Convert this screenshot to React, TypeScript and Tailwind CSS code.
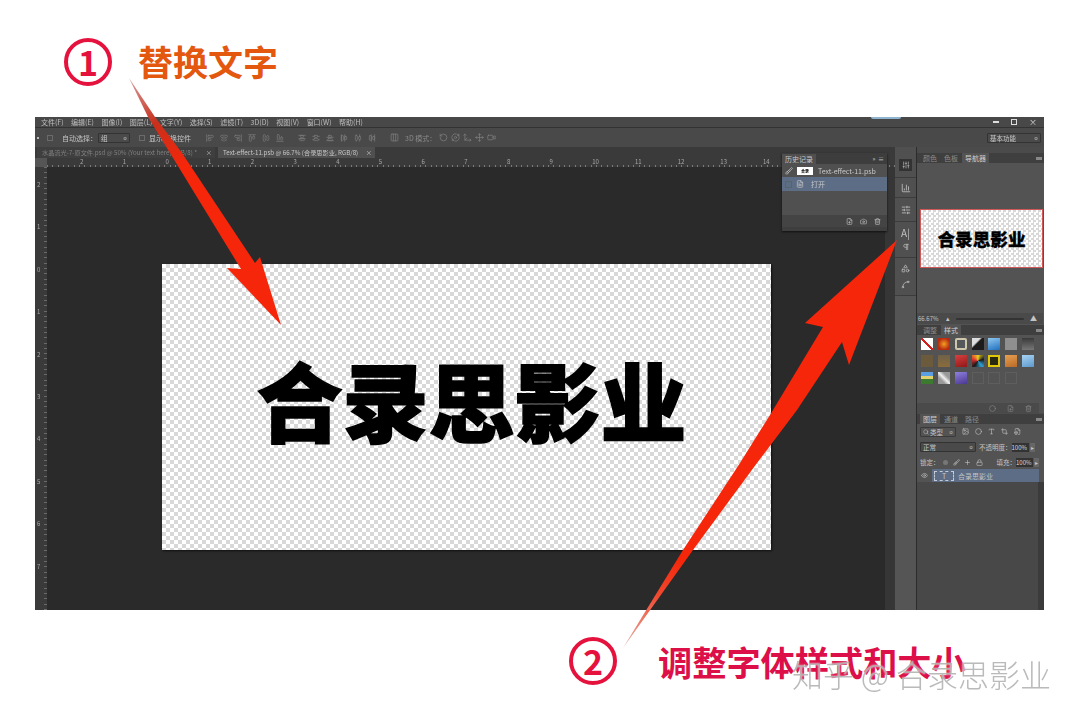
import React from 'react';
import {
  AlignStartVertical, AlignCenterVertical, AlignEndVertical,
  AlignStartHorizontal, AlignCenterHorizontal, AlignEndHorizontal,
  AlignVerticalDistributeStart, AlignVerticalDistributeCenter, AlignVerticalDistributeEnd,
  AlignHorizontalDistributeStart, AlignHorizontalDistributeCenter, AlignHorizontalDistributeEnd,
  Columns3, RotateCcw, Orbit, Move3d, Move, Video,
  BarChart3, SlidersHorizontal, Pilcrow, Shapes, Spline, Eye, Image, Circle, Type, Crop, FileBox,
  Lock, Brush, Camera, Trash2, FilePlus, FileText, Search, Plus,
} from 'lucide-react';

const menus = ['文件(F)', '编辑(E)', '图像(I)', '图层(L)', '文字(Y)', '选择(S)', '滤镜(T)', '3D(D)', '视图(V)', '窗口(W)', '帮助(H)'];
const alignA = [AlignStartVertical, AlignCenterVertical, AlignEndVertical, AlignStartHorizontal, AlignCenterHorizontal, AlignEndHorizontal];
const alignB = [AlignVerticalDistributeStart, AlignVerticalDistributeCenter, AlignVerticalDistributeEnd, AlignHorizontalDistributeStart, AlignHorizontalDistributeCenter, AlignHorizontalDistributeEnd];
const modes3d = [RotateCcw, Orbit, Move3d, Move, Video];
const rulerTop = ['2', '1', '0', '1', '2', '3', '4', '5', '6', '7', '8', '9', '10', '11', '12', '13', '14'];
const rulerLeft = ['2', '1', '0', '1', '2', '3', '4', '5', '6', '7'];

const swatches = [
  'bg-[linear-gradient(45deg,#fff_44%,#d02020_44%_56%,#fff_56%)]',
  'bg-[radial-gradient(circle,#f0a020,#b82a10_70%)]',
  'bg-[#55585a] border-2 border-[#cfc6ae] rounded-[2px]',
  'bg-[linear-gradient(135deg,#ddd_35%,#1c1c1c_45%)]',
  'bg-[linear-gradient(160deg,#8fc8f0,#1f6fc0)]',
  'bg-[#8f8f8f]',
  'bg-[linear-gradient(180deg,#3a3a3a,#777)]',
  'bg-[#6b5a3c]',
  'bg-[linear-gradient(180deg,#6f6149,#8a6c3c)]',
  'bg-[linear-gradient(160deg,#d84040,#901818)]',
  'bg-[conic-gradient(#e8d020,#1a1a1a,#30a0d0,#1a1a1a,#e03030,#e8d020)]',
  'bg-[#2a2a10] border-2 border-[#e0c808]',
  'bg-[linear-gradient(160deg,#e8a050,#b86a28)]',
  'bg-[linear-gradient(160deg,#a8d4f4,#5c98cc)]',
  'bg-[linear-gradient(180deg,#5aa0e0_35%,#e0d070_35%_60%,#3c7a30_60%)]',
  'bg-[linear-gradient(45deg,#999_30%,#eee_50%,#999_70%)]',
  'bg-[linear-gradient(160deg,#9080e0,#4a3890)]',
  'border border-[#5e5e5e]',
  'border border-[#5e5e5e]',
  'border border-[#5e5e5e]',
];

function Marker({ n }: { n: string }) {
  return (
    <div className="flex h-[48px] w-[48px] shrink-0 items-center justify-center rounded-full border-[4px] border-[#e5123e] text-[34px] font-bold leading-none text-[#e5123e]">
      {n}
    </div>
  );
}

function PanelTabs({ tabs, active }: { tabs: string[]; active: number }) {
  return (
    <div className="flex h-[10px] items-end justify-between bg-[#3f3f3f] pl-[3px] pr-[2px]">
      <div className="flex gap-px">
        {tabs.map((t, i) => (
          <span key={t} className={`h-[10px] px-[3px] text-[7px] leading-[10px] ${i === active ? 'bg-[#535353] text-[#cfcfcf]' : 'text-[#8c8c8c]'}`}>{t}</span>
        ))}
      </div>
      <span className="mb-[3px] h-[3px] w-[6px] bg-[#888]" />
    </div>
  );
}

function Field({ w, label }: { w: string; label: string }) {
  return (
    <span className={`flex h-[10px] items-center justify-between whitespace-nowrap rounded-[1px] border border-[#333] bg-[#4a4a4a] px-[2px] text-[6.5px] leading-[8px] text-[#c8c8c8] ${w}`}>
      {label}<span className="text-[5px]">≎</span>
    </span>
  );
}

export default function App() {
  return (
    <div className="relative flex h-[720px] w-[1080px] flex-col overflow-hidden bg-white font-['Liberation_Sans','Noto_Sans_CJK_SC',sans-serif]">
      {/* top caption */}
      <div className="flex h-[117px] shrink-0 items-start gap-[26px] pl-[64px] pt-[38px] font-['Noto_Sans_CJK_SC',sans-serif]">
        <Marker n="1" />
        <span className="mt-[2px] text-[35px] font-bold leading-[42px] text-[#e4570f]">替换文字</span>
      </div>

      {/* photoshop window */}
      <div className="ml-[35px] flex h-[493px] w-[1009px] shrink-0 flex-col bg-[#2a2a2a] blur-[0.4px] font-['Noto_Sans_CJK_SC','Liberation_Sans',sans-serif]">
        <div className="flex h-[10px] shrink-0 items-center justify-between bg-[#484848] pl-[6px] pr-[7px] text-[7px] leading-[10px] text-[#bdbdbd]">
          <div className="flex gap-[7.5px]">
            {menus.map((m) => <span key={m}>{m}</span>)}
          </div>
          <div className="flex items-center gap-[12px] text-[#ddd]">
            <span className="h-[2px] w-[6px] bg-[#ddd]" />
            <span className="h-[6px] w-[6px] border border-[#ddd]" />
            <span className="text-[8px] leading-[10px]">×</span>
          </div>
        </div>

        <div className="flex h-[20px] shrink-0 items-center border-t border-[#333] bg-[#494949] pl-[2px] pr-[3px] text-[7px] leading-[10px] text-[#c4c4c4]">
          <span className="mr-[8px] h-[2px] w-[2px] bg-[#bbb]" />
          <span className="mr-[9px] h-[6px] w-[6px] border border-[#6a6a6a]" />
          <span className="mr-[1px]">自动选择：</span>
          <Field w="w-[32px]" label="组" />
          <span className="ml-[9px] mr-[4px] h-[6px] w-[6px] border border-[#6a6a6a]" />
          <span>显示变换控件</span>
          <div className="ml-[15px] flex gap-[6px] text-[#7d7d7d]">
            {alignA.map((Icon, i) => <Icon key={i} size={8} />)}
          </div>
          <div className="ml-[14px] flex gap-[6px] text-[#7d7d7d]">
            {alignB.map((Icon, i) => <Icon key={i} size={8} />)}
          </div>
          <Columns3 size={9} className="ml-[14px] text-[#7d7d7d]" />
          <span className="ml-[6px] mr-[3px] whitespace-nowrap text-[#8a8a8a]">3D 模式：</span>
          <div className="flex gap-[3px] text-[#7d7d7d]">
            {modes3d.map((Icon, i) => <Icon key={i} size={9} />)}
          </div>
          <div className="ml-auto">
            <Field w="w-[54px]" label="基本功能" />
          </div>
        </div>

        <div className="flex min-h-0 flex-1">
          {/* document column */}
          <div className="relative flex w-[860px] shrink-0 flex-col">
            <div className="flex h-[11px] shrink-0 items-end whitespace-nowrap bg-[#3a3a3a] text-[6.2px] leading-[11px]">
              <span className="ml-[2px] flex h-[11px] w-[178px] justify-between bg-[#3f3f3f] pl-[5px] pr-[3px] text-[#7f7f7f]">
                <span>水晶流光-7-原文件.psd @ 50% (Your text here, RGB/8) *</span>
                <span className="text-[#bbb]">×</span>
              </span>
              <span className="ml-[3px] flex h-[11px] w-[157px] justify-between bg-[#4f4f4f] pl-[5px] pr-[3px] text-[#c8c8c8]">
                <span>Text-effect-11.psb @ 66.7% (合录思影业, RGB/8)</span>
                <span>×</span>
              </span>
            </div>

            <div className="flex h-[9px] shrink-0 bg-[#3a3a3a]">
              <div className="h-[9px] w-[12px] shrink-0 bg-[#555]" />
              <div className="flex min-w-0 flex-1 flex-col">
                <div className="flex h-[7px] pl-[31px] text-[6px] leading-[7px] text-[#a8a8a8]">
                  {rulerTop.map((n, i) => (
                    <span key={i} className="w-[42.7px] shrink-0 pl-[2px]">{n}</span>
                  ))}
                </div>
                <div className="h-[2px] bg-[repeating-linear-gradient(90deg,#7a7a7a_0_1px,transparent_1px_5.33px)]" />
              </div>
            </div>

            <div className="flex min-h-0 flex-1">
              <div className="flex w-[12px] shrink-0 flex-col bg-[#3a3a3a] bg-[repeating-linear-gradient(0deg,#6a6a6a_0_1px,transparent_1px_5.33px)] bg-[length:3px_100%] bg-right bg-no-repeat pl-[2px] pt-[14px] text-[6px] text-[#a8a8a8]">
                {rulerLeft.map((n, i) => (
                  <span key={i} className="h-[42.4px] shrink-0 leading-[7px]">{n}</span>
                ))}
              </div>
              <div className="flex-1 pl-[115px] pt-[97px]">
                <div className="flex h-[286px] w-[609px] items-center justify-center bg-[#fff] bg-[repeating-conic-gradient(#d8d8d8_0_25%,#fff_0_50%)] bg-[length:8px_8px] pb-[16px] pl-[10px] shadow-[1px_1px_2px_#111]">
                  <span className="whitespace-nowrap text-[86px] font-black leading-none text-black [-webkit-text-stroke:1.5px_#000]">合录思影业</span>
                </div>
              </div>
              <div className="w-[10px] shrink-0 bg-[#363636]" />
            </div>

            {/* floating history panel */}
            <div className="absolute left-[747px] top-[6px] flex h-[78px] w-[105px] flex-col bg-[#505050] text-[7px] leading-[10px] text-[#c8c8c8] shadow-[0_1px_2px_#111]">
              <div className="flex h-[11px] shrink-0 items-end justify-between bg-[#3d3d3d]">
                <span className="h-[10px] bg-[#4f4f4f] px-[3px] leading-[10px]">历史记录</span>
                <span className="mb-px mr-[3px] text-[6px] leading-[8px]">»&nbsp;&nbsp;≡</span>
              </div>
              <div className="flex h-[13px] shrink-0 items-center gap-[4px] pl-[3px]">
                <Brush size={8} />
                <span className="h-[8px] w-[16px] bg-white text-center text-[4px] font-bold leading-[8px] text-black">合录</span>
                <span className="ml-[1px]">Text-effect-11.psb</span>
              </div>
              <div className="flex h-[14px] shrink-0 items-center bg-[#5d6d86] pl-[3px]">
                <span className="h-[7px] w-[7px] border border-[#566]" />
                <FileText size={8} className="ml-[4px]" />
                <span className="ml-[7px]">打开</span>
              </div>
              <div className="flex-1" />
              <div className="flex h-[12px] shrink-0 items-center justify-end gap-[7px] bg-[#444] pr-[6px]">
                <FilePlus size={7} />
                <Camera size={7} />
                <Trash2 size={7} />
              </div>
              <div className="h-[4px] shrink-0 bg-[#3e3e3e]" />
            </div>
          </div>

          {/* icon dock */}
          <div className="flex w-[22px] shrink-0 flex-col items-center border-r border-[#2c2c2c] bg-[#505050] text-[#c0c0c0]">
            <div className="flex h-[31px] w-full flex-col items-center justify-end border-b border-[#3c3c3c] pb-[6px]">
              <span className="flex h-[12px] w-[13px] items-center justify-center bg-[#333]"><SlidersHorizontal size={8} className="rotate-90" /></span>
            </div>
            <div className="flex h-[20px] w-full items-center justify-center border-b border-[#3c3c3c]"><BarChart3 size={10} /></div>
            <div className="flex h-[24px] w-full items-center justify-center border-b border-[#3c3c3c]"><SlidersHorizontal size={10} /></div>
            <div className="flex h-[36px] w-full flex-col items-center justify-center gap-[5px] border-b border-[#3c3c3c]">
              <span className="text-[10px] leading-[10px]">A|</span>
              <Pilcrow size={8} />
            </div>
            <div className="flex h-[38px] w-full flex-col items-center justify-center gap-[7px] border-b border-[#3c3c3c]">
              <Shapes size={9} />
              <Spline size={9} />
            </div>
            <div className="flex-1 self-stretch bg-[#555]" />
          </div>

          {/* right panels */}
          <div className="flex w-[127px] shrink-0 flex-col bg-[#4b4b4b] text-[7px] leading-[10px] text-[#c4c4c4]">
            <div className="mt-[6px]"><PanelTabs tabs={['颜色', '色板', '导航器']} active={2} /></div>
            <div className="flex h-[162px] shrink-0 flex-col bg-[#535353] pl-[3px] pr-px pt-[46px]">
              <div className="flex h-[59px] w-[123px] items-center justify-center border border-[#d05858] bg-[repeating-conic-gradient(#d8d8d8_0_25%,#fff_0_50%)] bg-[length:5px_5px]">
                <span className="whitespace-nowrap text-[17.6px] font-black leading-[20px] text-black [-webkit-text-stroke:0.3px_#000]">合录思影业</span>
              </div>
              <div className="mb-[1px] ml-[-3px] mt-auto flex h-[11px] items-center gap-[6px] bg-[#4a4a4a] pl-[1px] pr-[6px] text-[6px] leading-[9px]">
                <span className="w-[22px]">66.67%</span>
                <span className="text-[7px] leading-[9px]">▴</span>
                <span className="h-[2px] flex-1 rounded bg-[#333]" />
                <span className="text-[7px] leading-[9px]">▲</span>
              </div>
            </div>

            <PanelTabs tabs={['调整', '样式']} active={1} />
            <div className="flex h-[78px] shrink-0 flex-col justify-between bg-[#535353] pr-[5px]">
              <div className="grid grid-cols-7 gap-y-[5px] pl-[4px] pt-[3px]">
                {swatches.map((c, i) => (
                  <span key={i} className={`h-[12px] w-[12px] ${c}`} />
                ))}
              </div>
              <div className="flex h-[10px] items-center justify-end gap-[11px] bg-[#4a4a4a] pr-[7px] text-[#888]">
                <Circle size={7} /><FilePlus size={7} /><Trash2 size={7} />
              </div>
            </div>

            <div className="mt-[1px]"><PanelTabs tabs={['图层', '通道', '路径']} active={0} /></div>
            <div className="flex h-[15px] shrink-0 items-center gap-[6px] bg-[#535353] pl-[3px]">
              <span className="flex h-[10px] w-[36px] items-center gap-[1px] rounded-[1px] border border-[#3a3a3a] px-[2px] text-[6.5px] leading-[8px]"><Search size={6} />类型<span className="ml-auto text-[5px]">≎</span></span>
              <Image size={7} /><Circle size={7} /><Type size={7} /><Crop size={7} /><FileBox size={7} />
            </div>
            <div className="flex h-[16px] shrink-0 items-center whitespace-nowrap bg-[#535353] pl-[3px] text-[6.5px]">
              <Field w="w-[56px]" label="正常" />
              <span className="ml-[3px]">不透明度：</span>
              <span className="h-[9px] w-[17px] bg-[#333] text-[6px] leading-[9px] text-[#ddd]">100%</span>
              <span className="ml-px h-[9px] w-[5px] bg-[#666] text-center text-[6px] leading-[9px]">▸</span>
            </div>
            <div className="flex h-[14px] shrink-0 items-center whitespace-nowrap bg-[#535353] pl-[3px] text-[6.5px]">
              <span>锁定：</span>
              <span className="ml-[3px] mr-[5px] h-[5px] w-[5px] rounded-full bg-[#777]" />
              <Brush size={7} className="mr-[4px] shrink-0" />
              <Plus size={7} className="mr-[5px] shrink-0" />
              <Lock size={7} className="shrink-0" />
              <span className="ml-[14px]">填充：</span>
              <span className="h-[9px] w-[17px] bg-[#333] text-[6px] leading-[9px] text-[#ddd]">100%</span>
              <span className="ml-px h-[9px] w-[5px] bg-[#666] text-center text-[6px] leading-[9px]">▸</span>
            </div>
            <div className="flex h-[13px] shrink-0 items-center bg-[#535353] pr-[5px]">
              <span className="flex h-[13px] w-[15px] items-center justify-center"><Eye size={7} /></span>
              <span className="flex h-[13px] flex-1 items-center bg-[#5d6d86]">
                <span className="ml-[2px] flex h-[10px] w-[20px] items-center justify-center border border-dashed border-[#c5ccd6] text-[7px] leading-[8px]">T</span>
                <span className="ml-[4px]">合录思影业</span>
              </span>
            </div>
            <div className="min-h-0 flex-1 border-r-[6px] border-[#3b3b3b] bg-[#484848]" />
          </div>
        </div>
      </div>

      {/* bottom caption */}
      <div className="flex min-h-0 flex-1 items-start pl-[569px] pt-[27px] font-['Noto_Sans_CJK_SC',sans-serif]">
        <Marker n="2" />
        <span className="ml-[41px] mt-[2px] text-[34.2px] font-bold leading-[44px] text-[#dc0f48]">调整字体样式和大小</span>
      </div>

      {/* window title highlight that pokes out of the top */}
      <span className="absolute left-[871px] top-[117px] h-[2px] w-[30px] rounded-b bg-[#8fb4cf]" />

      {/* annotation arrows */}
      <svg className="pointer-events-none absolute left-0 top-0" width="1080" height="720" viewBox="0 0 1080 720">
        <defs>
          <linearGradient id="tailA" gradientUnits="userSpaceOnUse" x1="129" y1="78" x2="175" y2="170">
            <stop offset="0" stopColor="#d8a0a0" />
            <stop offset="0.5" stopColor="#c8301c" />
            <stop offset="1" stopColor="#f5260a" />
          </linearGradient>
          <linearGradient id="tailB" gradientUnits="userSpaceOnUse" x1="623" y1="648" x2="680" y2="560">
            <stop offset="0" stopColor="#e8b0a8" />
            <stop offset="0.6" stopColor="#ef4a30" />
            <stop offset="1" stopColor="#f5260a" />
          </linearGradient>
        </defs>
        <path d="M129 78 L148 117 L170 153 L241 269 L227 268 L281 325 L260 257 L255 263 L182 153 L155 117 Z" fill="url(#tailA)" />
        <path d="M897 240 L805 323 L823 327 L770 415 L740 463 L683 550 L623 648 L693 550 L757 463 L797 410 L842 342 L849 365 Z" fill="url(#tailB)" />
      </svg>

      {/* watermark */}
      <span className="absolute left-[792px] top-[654px] whitespace-nowrap font-['Noto_Sans_CJK_SC',sans-serif] text-[31px] font-light leading-[40px] text-[#a9a9a9]/80 [text-shadow:0_0_2px_#fff]">
        知乎 @ 合录思影业
      </span>
    </div>
  );
}
